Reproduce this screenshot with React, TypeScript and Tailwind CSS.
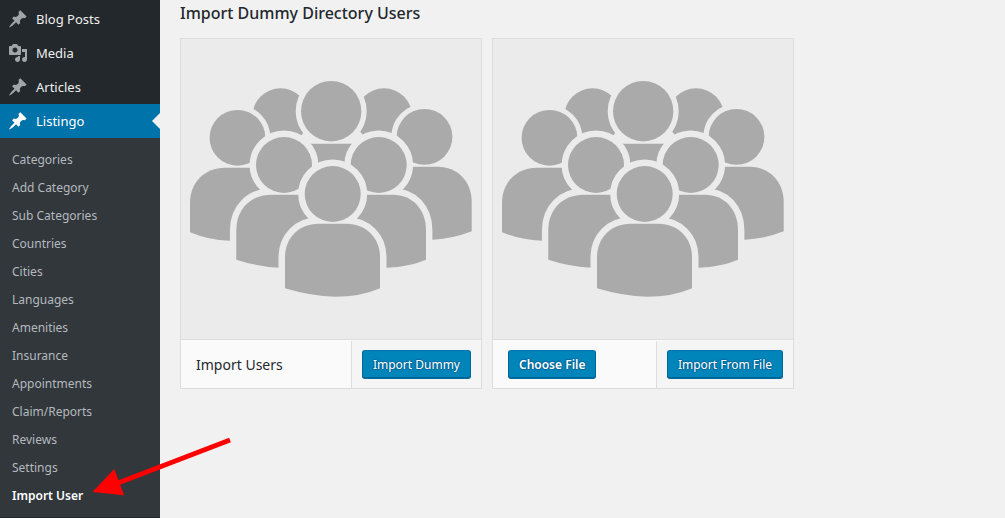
import type { ReactNode } from "react";

type IconProps = { className?: string };

function PinIcon({ className }: IconProps) {
  return (
    <svg viewBox="0 0 20 20" className={className} fill="currentColor" aria-hidden="true">
      <path d="M10.44 3.02l1.82-1.82 6.36 6.35-1.83 1.82c-1.05-.68-2.48-.57-3.41.36l-.75.75c-.92.93-1.04 2.35-.35 3.41l-1.83 1.82-2.41-2.41-2.8 2.79c-.42.42-3.38 2.71-3.8 2.29s1.86-3.39 2.28-3.81l2.79-2.79L4.1 9.36l1.83-1.82c1.05.69 2.48.57 3.4-.36l.75-.75c.93-.92 1.05-2.35.36-3.41z" />
    </svg>
  );
}

function MediaIcon({ className }: IconProps) {
  return (
    <svg viewBox="0 0 20 20" className={className} fill="currentColor" aria-hidden="true">
      <path d="M13 11V4c0-.55-.45-1-1-1h-1.67L9 1H5L3.67 3H2c-.55 0-1 .45-1 1v7c0 .55.45 1 1 1h10c.55 0 1-.45 1-1zM7 4.5c1.38 0 2.5 1.12 2.5 2.5S8.38 9.5 7 9.5 4.5 8.38 4.5 7 5.62 4.5 7 4.5zM14 6h5v10.5c0 1.38-1.12 2.5-2.5 2.5S14 17.88 14 16.5s1.12-2.5 2.5-2.5c.17 0 .34.02.5.05V9h-3V6zm-4 8.05V13h2v3.5c0 1.38-1.12 2.5-2.5 2.5S7 17.88 7 16.5 8.12 14 9.5 14c.17 0 .34.02.5.05z" />
    </svg>
  );
}

type PersonProps = { cx: number; cy: number; r: number; body?: string; halo: number };

/* A head and shoulders with a background-coloured halo separating it from the people behind. */
function Person({ cx, cy, r, body, halo }: PersonProps) {
  return (
    <g>
      <g fill="#ebebeb" stroke="#ebebeb" strokeWidth={halo * 2}>
        {body && <path d={body} />}
        <circle cx={cx} cy={cy} r={r} />
      </g>
      <g fill="#aaaaaa">
        {body && <path d={body} />}
        <circle cx={cx} cy={cy} r={r} />
      </g>
    </g>
  );
}

function CrowdPicture() {
  return (
    <svg viewBox="0 0 300 300" className="block w-full bg-[#ebebeb]" role="img" aria-label="Group of users">
      <Person cx={99.5} cy={77.5} r={28.2} halo={0} />
      <Person cx={203} cy={77.5} r={28.2} halo={0} />
      <Person cx={150.2} cy={72.2} r={30.2} halo={5.3} />
      <path fill="#aaaaaa" d="M128 104.7H172V130H128Z" />
      <Person
        cx={56.5}
        cy={98.8}
        r={27.9}
        halo={5}
        body="M9 193.3V164C9 143 24 128.7 44 128.7H90V201.7H48.3Q28 201.2 9 193.3Z"
      />
      <Person
        cx={243.5}
        cy={97.9}
        r={27.9}
        halo={5.3}
        body="M290.7 192.3V163C290.7 142 276 127.8 256.7 127.8H210V200.7H251.7Q272 199.7 290.7 192.3Z"
      />
      <Person
        cx={103}
        cy={126}
        r={28}
        halo={6.4}
        body="M55.3 220.7V191C55.3 170 70 155.7 90.7 155.7H130V228.7H97.7Q76 227.5 55.3 220.7Z"
      />
      <Person
        cx={197.7}
        cy={126}
        r={28}
        halo={6.4}
        body="M245 220.7V191C245 170 231 155.7 212 155.7H170V228.7H206Q228 228 245 220.7Z"
      />
      <Person
        cx={151.7}
        cy={155}
        r={28}
        halo={6.5}
        body="M104 249.3V218C104 199 118 184.7 137.3 184.7H165.7C185 184.7 199 199 199 218V249.3Q180 257.7 154 257.7Q130 257.2 104 249.3Z"
      />
    </svg>
  );
}

const menu = [
  { label: "Blog Posts", Icon: PinIcon },
  { label: "Media", Icon: MediaIcon },
  { label: "Articles", Icon: PinIcon },
];

const submenu = [
  "Categories",
  "Add Category",
  "Sub Categories",
  "Countries",
  "Cities",
  "Languages",
  "Amenities",
  "Insurance",
  "Appointments",
  "Claim/Reports",
  "Reviews",
  "Settings",
];

function Sidebar() {
  return (
    <nav aria-label="Admin menu" className="w-40 shrink-0 bg-[#23282d] pt-0.5">
      <ul className="text-[13px] leading-5 text-[#eeeeee]">
        {menu.map(({ label, Icon }) => (
          <li key={label}>
            <a href="#" className="flex h-[34px] items-center gap-2 pl-2">
              <Icon className="size-5 text-[#a0a5aa]" />
              {label}
            </a>
          </li>
        ))}
        <li>
          <a href="#" className="relative flex h-[34px] items-center gap-2 bg-[#0073aa] pl-2 text-white">
            <PinIcon className="size-5" />
            Listingo
            <span className="absolute top-1/2 right-0 -translate-y-1/2 border-y-8 border-r-8 border-y-transparent border-r-[#f1f1f1]" />
          </a>
          <ul className="bg-[#32373c] pt-[7px] pb-2 text-xs text-[#b4b9be]">
            {submenu.map((label) => (
              <li key={label}>
                <a href="#" className="flex h-7 items-center px-3 pt-0.5">
                  {label}
                </a>
              </li>
            ))}
            <li>
              <a href="#" aria-current="page" className="flex h-7 items-center px-3 pt-0.5 font-semibold text-white">
                Import User
              </a>
            </li>
          </ul>
        </li>
      </ul>
    </nav>
  );
}

const buttonClass =
  "h-7 rounded-[3px] border border-[#006799] border-t-[#0073aa] bg-[#0085ba] px-2.5 pt-0.5 text-xs text-white shadow-[0_1px_0_#006799] [text-shadow:0_-1px_1px_#006799,1px_0_1px_#006799,0_1px_1px_#006799,-1px_0_1px_#006799]";

function Card({ children, action }: { children: ReactNode; action: string }) {
  return (
    <article className="w-[302px] border border-[#dddddd] bg-[#fafafa]">
      <CrowdPicture />
      <div className="flex border-t border-[#dddddd] pt-px">
        <div className="flex flex-1 items-center pt-[9px] pb-2.5 pl-[15px]">{children}</div>
        <div className="border-l border-[#dddddd] bg-[#f5f5f5] px-2.5 pt-[9px] pb-2.5">
          <button type="button" className={`${buttonClass} block`}>
            {action}
          </button>
        </div>
      </div>
    </article>
  );
}

function Arrow() {
  return (
    <svg
      viewBox="0 0 142 64"
      className="pointer-events-none absolute top-[434px] left-[91px] w-[142px]"
      aria-hidden="true"
    >
      <path d="M139 6L27 49" stroke="#ff0000" strokeWidth="5" />
      <path d="M1.5 58L23.3 35L33 61.2Z" fill="#ff0000" />
    </svg>
  );
}

export default function App() {
  return (
    <div className="relative flex min-h-screen bg-[#f1f1f1] font-['Noto_Sans',sans-serif]">
      <Sidebar />
      <main className="min-w-0 flex-1 px-5 pt-px">
        <h1 className="text-base leading-6 font-medium text-[#23282d]">Import Dummy Directory Users</h1>
        <div className="mt-[13px] flex flex-wrap gap-2.5">
          <Card action="Import Dummy">
            <h2 className="pt-0.5 text-sm text-[#23282d]">Import Users</h2>
          </Card>
          <Card action="Import From File">
            <button type="button" className={`${buttonClass} font-semibold`}>
              Choose File
            </button>
          </Card>
        </div>
      </main>
      <Arrow />
    </div>
  );
}
